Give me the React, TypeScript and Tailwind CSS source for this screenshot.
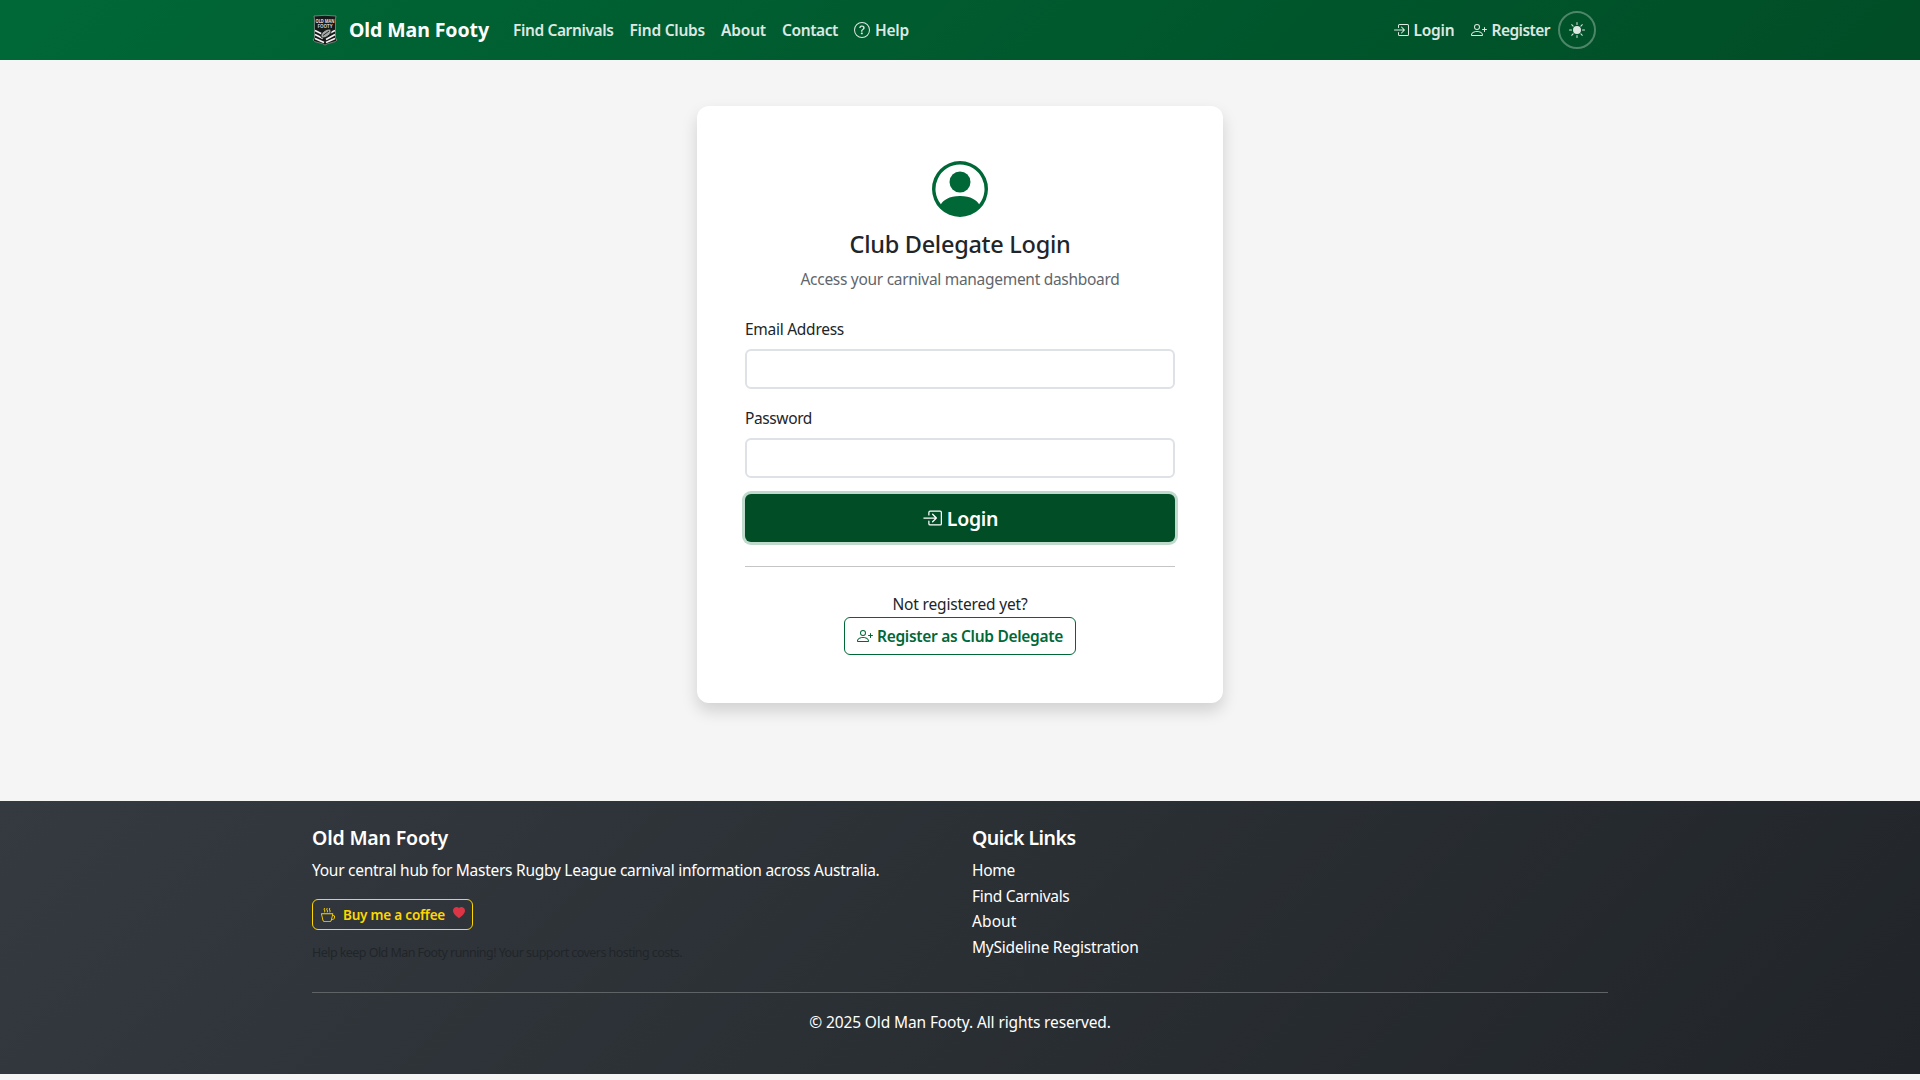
import { useLayoutEffect, useRef, useState } from "react";
import type { ReactNode } from "react";
import {
  BsBoxArrowInRight,
  BsCupHot,
  BsHeartFill,
  BsPersonCircle,
  BsPersonPlus,
  BsQuestionCircle,
  BsSunFill,
} from "react-icons/bs";

// Text whose tracking is adjusted so that the run takes up the given width.
function Fit({ w, children, className = "" }: { w: number; children: string; className?: string }) {
  const ref = useRef<HTMLSpanElement>(null);
  const [spacing, setSpacing] = useState(0);
  useLayoutEffect(() => {
    if (ref.current) {
      const natural = ref.current.getBoundingClientRect().width;
      setSpacing((w - natural) / children.length);
    }
  }, [w, children]);
  return (
    <span ref={ref} className={`inline-block whitespace-nowrap ${className}`} style={{ letterSpacing: spacing }}>
      {children}
    </span>
  );
}

function Crest() {
  return (
    <svg width="26" height="32" viewBox="0 -2 26 32" className="shrink-0 overflow-visible leading-none">
      <path d="M2 0 Q13 -1.4 24 0 L23.5 3 V22 L25 24 Q24 26 20 26.5 Q15 27.5 13 29 Q11 27.5 6 26.5 Q2 26 1 24 L2.5 22 V3Z" fill="#151918" stroke="#87928c" strokeWidth=".8" />
      <text x="13" y="6.6" textAnchor="middle" fontSize="6" fontWeight="700" textLength="19" lengthAdjust="spacingAndGlyphs" fill="#e2e2e2">OLD MAN</text>
      <text x="13" y="12" textAnchor="middle" fontSize="5.6" fontWeight="700" textLength="15" lengthAdjust="spacingAndGlyphs" fill="#cfcfcf">FOOTY</text>
      <path d="M3 14.5 L10 18 M3 18.5 L11 22.5 M3 22.5 L12 26.5 M23 14.5 L18 17 M23 18.5 L14 23.5 M23 22.5 L14 26.5" stroke="#f2f2f2" strokeWidth="1.7" />
      <ellipse cx="14" cy="17.5" rx="6" ry="3.2" transform="rotate(-38 14 17.5)" fill="#a3a7a5" stroke="#151918" strokeWidth=".9" />
      <path d="M11 19.5 L17 15" stroke="#1b1e1d" strokeWidth=".9" />
    </svg>
  );
}

function NavItem({ w, label, icon }: { w: number; label: string; icon?: ReactNode }) {
  return (
    <a href="#" className="flex items-center gap-[5px] px-2">
      {icon}
      <Fit w={w}>{label}</Fit>
    </a>
  );
}

function Field({ w, label, type }: { w: number; label: string; type: string }) {
  return (
    <label className="block">
      <span className="block h-6 leading-6">
        <Fit w={w}>{label}</Fit>
      </span>
      <input type={type} className="mt-2 block h-10 w-full rounded-md border-2 border-[#dee2e6] bg-white px-3 outline-none" />
    </label>
  );
}

export default function App() {
  return (
    <div className="h-[1080px] overflow-hidden bg-[#f5f5f5] font-['Noto_Sans','Open_Sans',sans-serif] text-[15.5px] leading-6 text-[#212529]">
      <nav className="h-[60px] bg-linear-135 from-[#006837] to-[#004d26]">
        <div className="mx-auto flex h-full w-[1296px] items-center text-[15.5px] font-semibold text-[#dce8e1]">
          <div className="flex items-center text-white">
            <Crest />
            <Fit w={140} className="ml-[11px] text-[19.5px] font-bold">Old Man Footy</Fit>
          </div>
          <div className="ml-4 flex items-center">
            <NavItem w={100.5} label="Find Carnivals" />
            <NavItem w={75.5} label="Find Clubs" />
            <NavItem w={45} label="About" />
            <NavItem w={56} label="Contact" />
            <NavItem w={34} label="Help" icon={<BsQuestionCircle size={16} />} />
          </div>
          <div className="mr-3 ml-auto flex items-center">
            <NavItem w={41} label="Login" icon={<BsBoxArrowInRight size={16} />} />
            <NavItem w={58.5} label="Register" icon={<BsPersonPlus size={16} />} />
            <button className="flex size-[38px] items-center justify-center rounded-full border-2 border-white/30">
              <BsSunFill size={16} />
            </button>
          </div>
        </div>
      </nav>

      <main className="flex h-[741px] items-start justify-center pt-[46px]">
        <section className="h-[597px] w-[526px] rounded-xl bg-white px-12 pt-[55px] shadow-[0_8px_16px_rgba(0,0,0,0.15)]">
          <div className="flex flex-col items-center">
            <BsPersonCircle size={56} className="text-[#006837]" />
            <h1 className="mt-[13px] h-[29px] text-[23.5px] leading-[29px] font-medium">
              <Fit w={221}>Club Delegate Login</Fit>
            </h1>
            <p className="mt-2 text-[#5f666c]">
              <Fit w={319}>Access your carnival management dashboard</Fit>
            </p>
          </div>
          <form className="mt-[26px]">
            <Field w={99} label="Email Address" type="email" />
            <div className="h-[17px]" />
            <Field w={67} label="Password" type="password" />
            <button type="button" className="mt-4 flex h-12 w-full items-center justify-center gap-[5px] rounded-md bg-[#004d26] text-[19.5px] font-semibold text-white ring-3 ring-[#006837]/25">
              <BsBoxArrowInRight size={20} />
              <Fit w={51.5} className="pt-px">Login</Fit>
            </button>
          </form>
          <hr className="mt-6 border-[#c4c5c6]" />
          <div className="mt-[25px] flex flex-col items-center">
            <Fit w={135}>Not registered yet?</Fit>
            <button className="mt-px flex h-[38px] w-[232px] items-center justify-center gap-1 rounded-md border border-[#006837] font-semibold text-[#006837]">
              <BsPersonPlus size={16} />
              <Fit w={186}>Register as Club Delegate</Fit>
            </button>
          </div>
        </section>
      </main>

      <footer className="h-[273px] bg-linear-135 from-[#343a40] to-[#212529] pt-[25px] text-white">
        <div className="mx-auto w-[1296px]">
          <div className="grid h-[166px] grid-cols-[660px_1fr]">
            <div>
              <h2 className="h-6 text-[19.5px] leading-6 font-semibold">
                <Fit w={136}>Old Man Footy</Fit>
              </h2>
              <p className="mt-2">
                <Fit w={567.5}>Your central hub for Masters Rugby League carnival information across Australia.</Fit>
              </p>
              <button className="mt-[17px] flex h-[31px] w-[161px] items-center rounded-md border border-[#ffd700] pl-2 text-[13.5px] font-semibold text-[#ffd700]">
                <BsCupHot size={14} />
                <Fit w={102} className="ml-2">Buy me a coffee</Fit>
                <BsHeartFill size={12} className="mb-[3px] ml-2 text-[#dc3545]" />
              </button>
              <p className="mt-[11px] text-[12.5px] text-[#212529]">
                <Fit w={370}>Help keep Old Man Footy running! Your support covers hosting costs.</Fit>
              </p>
            </div>
            <div>
              <h2 className="h-6 text-[19.5px] leading-6 font-semibold">
                <Fit w={103.5}>Quick Links</Fit>
              </h2>
              <ul className="mt-2 leading-[25.6px]">
                <li><Fit w={43}>Home</Fit></li>
                <li><Fit w={97.5}>Find Carnivals</Fit></li>
                <li><Fit w={44.5}>About</Fit></li>
                <li><Fit w={166.5}>MySideline Registration</Fit></li>
              </ul>
            </div>
          </div>
          <hr className="border-[#5f6366]" />
          <p className="mt-[17px] text-center">
            <Fit w={301.5}>© 2025 Old Man Footy. All rights reserved.</Fit>
          </p>
        </div>
      </footer>
      <div className="h-1.5 bg-[#f5f5f5]" />
    </div>
  );
}
